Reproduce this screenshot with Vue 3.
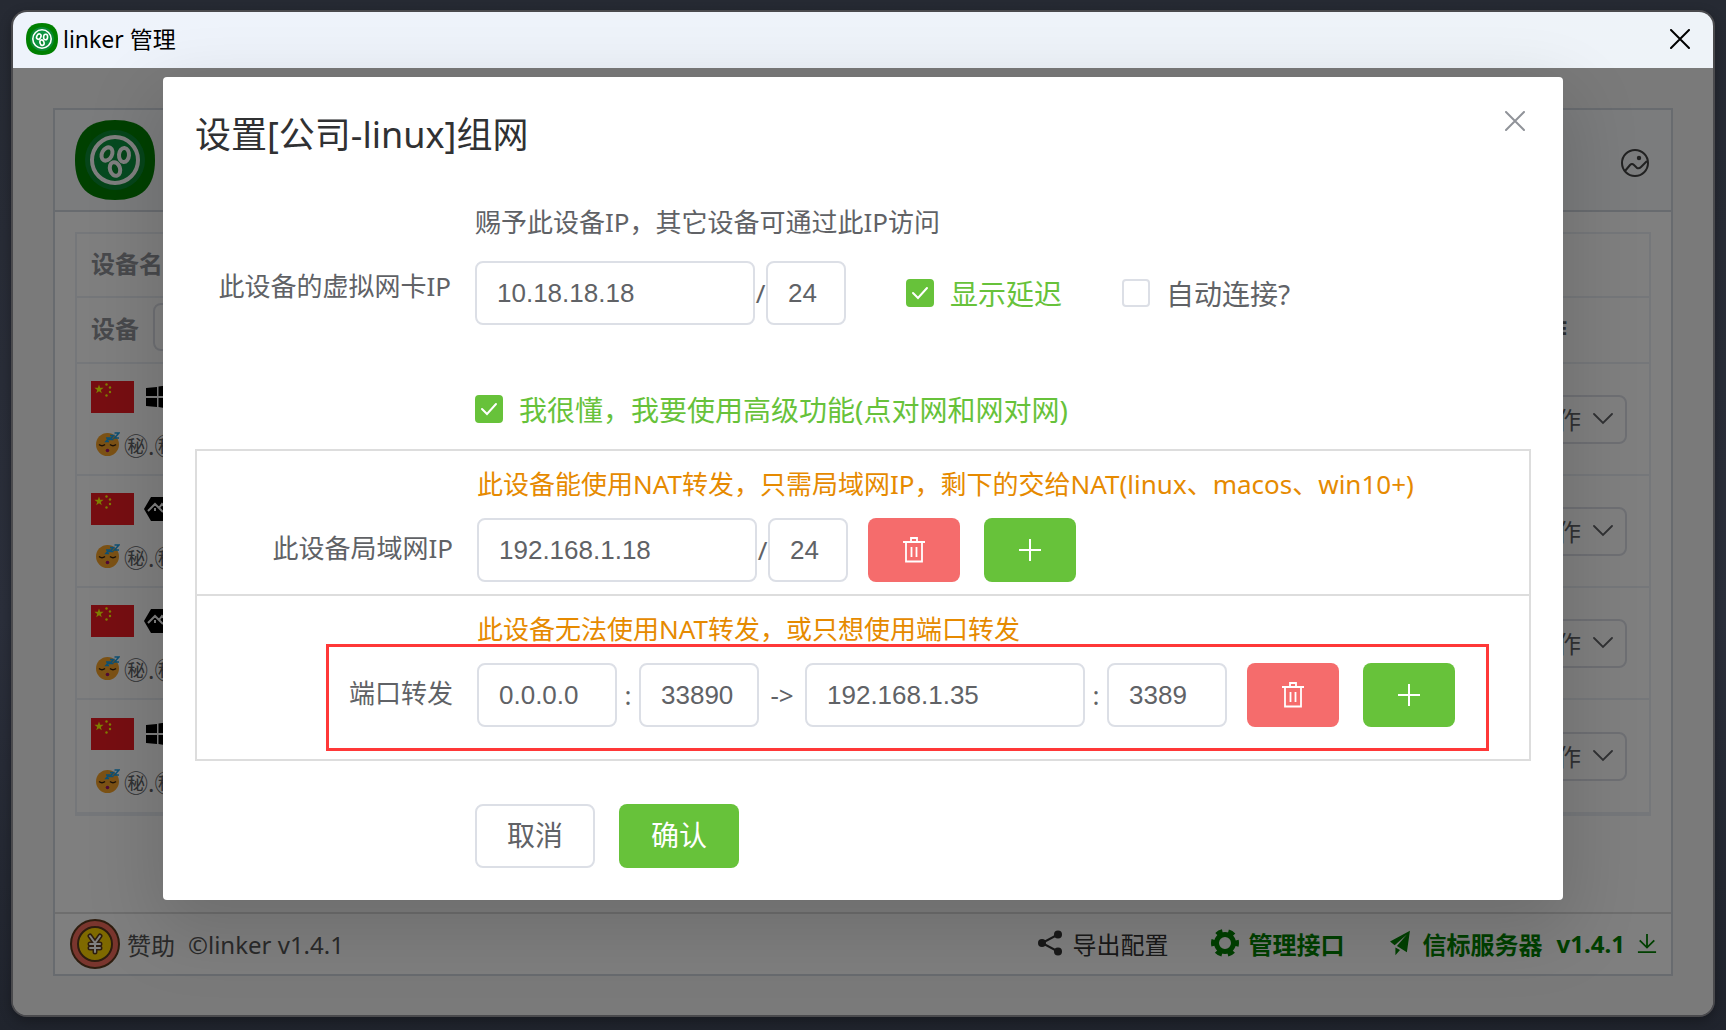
<script setup>
import { ref } from 'vue'

const devices = ref([
  { id: 1, system: 'windows' },
  { id: 2, system: 'alpine' },
  { id: 3, system: 'alpine' },
  { id: 4, system: 'windows' },
])
const maskedIp = '㊙.㊙.㊙.㊙'

const keyword = ref('')
const ip = ref('10.18.18.18')
const prefix = ref('24')
const showDelay = ref(true)
const autoConnect = ref(false)
const advanced = ref(true)
const lanIp = ref('192.168.1.18')
const lanPrefix = ref('24')
const listenIp = ref('0.0.0.0')
const listenPort = ref('33890')
const targetIp = ref('192.168.1.35')
const targetPort = ref('3389')
</script>

<template>
  <!-- shared icon symbols -->
  <svg class="symbols" aria-hidden="true">
    <symbol id="logo" viewBox="0 0 80 80">
      <path d="M40 0C67 0 80 13 80 40S67 80 40 80 0 67 0 40 13 0 40 0Z" fill="#008000" />
      <circle cx="40" cy="40" r="30" fill="#0c8a35" />
      <circle cx="40" cy="40" r="23" fill="#0d9440" stroke="#fff" stroke-width="4" />
      <g fill="#0a8a30" stroke="#fff" stroke-width="4">
        <ellipse cx="32" cy="34" rx="5" ry="7" transform="rotate(28 32 34)" />
        <ellipse cx="49" cy="35" rx="5" ry="7" transform="rotate(4 49 35)" />
        <ellipse cx="40" cy="49" rx="5" ry="7" transform="rotate(-18 40 49)" />
      </g>
    </symbol>
    <symbol id="flag" viewBox="0 0 43 32">
      <path d="M0 0h43v32H0z" fill="#ee1c25" />
      <path d="M8 3.6l1.1 3.2h3.5L9.8 8.9l1 3.3L8 10.2l-2.8 2 1-3.3-2.8-2.1h3.5z" fill="#ff0" />
      <g fill="#ff0">
        <circle cx="15.500" cy="3.500" r="1.200" />
        <circle cx="19" cy="6.500" r="1.200" />
        <circle cx="19" cy="11" r="1.200" />
        <circle cx="15.500" cy="14.500" r="1.200" />
      </g>
    </symbol>
    <symbol id="windows" viewBox="0 0 24 24">
      <path d="M0 3l11-1v9H0zM12.500 1.500L24 0v11H12.500zM0 13h11v9l-11-1zM12.500 13H24v11l-11.500-2z" />
    </symbol>
    <symbol id="alpine" viewBox="0 0 28 24">
      <path d="M7 0h14l7 12-7 12H7L0 12z" />
      <path d="M4 14l7-7 8 8M15 11l3-4 7 7M11 11v3" fill="none" stroke="#fff" stroke-width="2" />
    </symbol>
    <symbol id="sleep" viewBox="0 0 24 24">
      <circle cx="11.500" cy="12.500" r="11.500" fill="#f9a52b" />
      <path d="M3 12.500q3 2.500 6 0M14 12.500q3 2.500 6 0" fill="none" stroke="#3a2410" stroke-width="1.600" />
      <circle cx="11.500" cy="18.500" r="1.800" fill="#a0146e" />
      <path d="M10 6h3l-3 3.500h3M14 3.500h3.500L14 7.500h3.500M18.500 1H23l-4.500 5H23" fill="none" stroke="#1aa0e8" stroke-width="1.600" />
    </symbol>
    <symbol id="close" viewBox="0 0 20 20">
      <path d="M1 1l18 18M19 1L1 19" fill="none" stroke="currentColor" stroke-width="2" stroke-linecap="round" />
    </symbol>
    <symbol id="trash" viewBox="0 0 24 26">
      <path d="M1 5h22M9 5V1h6v4M4 5v19.500h16V5M9.500 10v10M14.500 10v10" fill="none" stroke="currentColor" stroke-width="1.800" />
    </symbol>
    <symbol id="plus" viewBox="0 0 24 24">
      <path d="M12 1v22M1 12h22" fill="none" stroke="currentColor" stroke-width="2" />
    </symbol>
    <symbol id="chevron" viewBox="0 0 20 20">
      <path d="M1 6l9 9 9-9" fill="none" stroke="currentColor" stroke-width="1.800" stroke-linecap="round" />
    </symbol>
  </svg>

  <div class="desktop">
    <section class="window">
      <header class="titlebar">
        <svg class="titlebar-logo"><use href="#logo" /></svg>
        <h1>linker 管理</h1>
        <button class="icon-button" type="button" aria-label="关闭窗口">
          <svg class="icon-20"><use href="#close" /></svg>
        </button>
      </header>

      <div class="viewport">
        <main class="frame">
          <div class="frame-head">
            <svg class="frame-logo"><use href="#logo" /></svg>
            <button class="icon-button picture-button" type="button" aria-label="背景图片">
              <svg class="icon-28" viewBox="0 0 28 28" fill="none" stroke="currentColor" stroke-width="2">
                <circle cx="14" cy="14" r="13" />
                <path d="M4 22l5-6q2-2 4 0l3 3q2 1 4-1l6-6" />
                <circle cx="18" cy="9" r="1.200" fill="currentColor" />
              </svg>
            </button>
          </div>

          <div class="frame-body">
            <table class="devices">
              <thead>
                <tr class="row-head"><th>设备名</th><th class="col-op"></th></tr>
                <tr class="row-search">
                  <th>
                    <label class="search">设备<input v-model="keyword" type="text" /></label>
                  </th>
                  <th class="col-op">操作</th>
                </tr>
              </thead>
              <tbody>
                <tr v-for="device in devices" :key="device.id">
                  <td>
                    <div class="device-line">
                      <svg class="flag"><use href="#flag" /></svg>
                      <svg class="system"><use :href="'#' + device.system" /></svg>
                    </div>
                    <div class="device-line device-ip">
                      <svg class="icon-24"><use href="#sleep" /></svg>
                      <span>{{ maskedIp }}</span>
                    </div>
                  </td>
                  <td class="col-op">
                    <button class="op" type="button">
                      操作<svg class="icon-20"><use href="#chevron" /></svg>
                    </button>
                  </td>
                </tr>
              </tbody>
            </table>
          </div>

          <footer class="frame-foot">
            <a class="sponsor" href="#">
              <svg class="coin" viewBox="0 0 50 50">
                <circle cx="25" cy="25" r="24" fill="#f56c5c" stroke="#5c3a1e" stroke-width="2" />
                <circle cx="25" cy="25" r="17" fill="#ffd500" stroke="#5c3a1e" stroke-width="2" />
                <g fill="none" stroke-linecap="round" stroke-linejoin="round">
                  <path d="M20 17l5 7 5-7M25 24v9M20 25h10M20 29h10" stroke="#5c3a1e" stroke-width="5" />
                  <path d="M20 17l5 7 5-7M25 24v9M20 25h10M20 29h10" stroke="#fff" stroke-width="2" />
                </g>
              </svg>
              赞助
            </a>
            <a class="copyright" href="#">©linker v1.4.1</a>
            <nav class="foot-links">
              <a href="#">
                <svg class="icon-26" viewBox="0 0 24 26">
                  <path d="M20 4.500L4 13l16 8.500" fill="none" stroke="currentColor" stroke-width="2" />
                  <g fill="currentColor">
                    <circle cx="20" cy="4.500" r="4" /><circle cx="4" cy="13" r="4" /><circle cx="20" cy="21.500" r="4" />
                  </g>
                </svg>
                导出配置
              </a>
              <a class="online" href="#">
                <svg class="icon-28" viewBox="0 0 28 28" fill="none" stroke="currentColor">
                  <circle cx="14" cy="14" r="8.500" stroke-width="5" />
                  <circle cx="14" cy="14" r="12" stroke-width="4" stroke-dasharray="6.500 6.066" stroke-dashoffset="3.250" />
                </svg>
                管理接口
              </a>
              <a class="online" href="#">
                <svg class="icon-26" viewBox="0 0 26 34" fill="currentColor">
                  <path d="M26 1L0 15l6 5L22 6 9 21l13 8zM7 23v10l6-7z" />
                </svg>
                信标服务器
                <span class="version">v1.4.1</span>
                <svg class="icon-20" viewBox="0 0 20 22" fill="none" stroke="currentColor" stroke-width="2">
                  <path d="M10 1v14M2 8l8 8 8-8M0 21h20" />
                </svg>
              </a>
            </nav>
          </footer>
        </main>

        <div class="mask">
          <div class="dialog" role="dialog" aria-labelledby="dialog-title">
            <header class="dialog-head">
              <h2 id="dialog-title">设置[公司-linux]组网</h2>
              <button class="icon-button" type="button" aria-label="关闭">
                <svg class="icon-20"><use href="#close" /></svg>
              </button>
            </header>

            <form @submit.prevent>
              <div class="item">
                <label class="label label-card" for="ip">此设备的虚拟网卡IP</label>
                <div class="content">
                  <p class="hint">赐予此设备IP，其它设备可通过此IP访问</p>
                  <div class="controls">
                    <input id="ip" v-model="ip" class="field w-ip" type="text" />
                    <span class="slash">/</span>
                    <input v-model="prefix" class="field w-prefix" type="text" aria-label="掩码" />
                    <label class="check check-delay"><input v-model="showDelay" type="checkbox" /><span>显示延迟</span></label>
                    <label class="check check-auto"><input v-model="autoConnect" type="checkbox" /><span>自动连接?</span></label>
                  </div>
                </div>
              </div>

              <div class="item item-advanced">
                <label class="check"><input v-model="advanced" type="checkbox" /><span>我很懂，我要使用高级功能(点对网和网对网)</span></label>
              </div>

              <div class="advanced">
                <div class="item item-lan">
                  <label class="label" for="lan-ip">此设备局域网IP</label>
                  <div class="content">
                    <p class="hint hint-warn">此设备能使用NAT转发，只需局域网IP，剩下的交给NAT(linux、macos、win10+)</p>
                    <div class="controls">
                      <input id="lan-ip" v-model="lanIp" class="field w-ip" type="text" />
                      <span class="slash">/</span>
                      <input v-model="lanPrefix" class="field w-prefix" type="text" aria-label="局域网掩码" />
                      <button class="btn btn-icon btn-danger" type="button" aria-label="删除">
                        <svg class="icon-26"><use href="#trash" /></svg>
                      </button>
                      <button class="btn btn-icon btn-success" type="button" aria-label="添加">
                        <svg class="icon-24"><use href="#plus" /></svg>
                      </button>
                    </div>
                  </div>
                </div>

                <div class="item item-forward">
                  <label class="label" for="listen-ip">端口转发</label>
                  <div class="content">
                    <p class="hint hint-warn">此设备无法使用NAT转发，或只想使用端口转发</p>
                    <div class="controls">
                      <input id="listen-ip" v-model="listenIp" class="field w-listen" type="text" />
                      <span class="colon">:</span>
                      <input v-model="listenPort" class="field w-port" type="text" aria-label="监听端口" />
                      <span class="arrow">-&gt;</span>
                      <input v-model="targetIp" class="field w-ip" type="text" aria-label="目标IP" />
                      <span class="colon">:</span>
                      <input v-model="targetPort" class="field w-port" type="text" aria-label="目标端口" />
                      <button class="btn btn-icon btn-danger" type="button" aria-label="删除">
                        <svg class="icon-26"><use href="#trash" /></svg>
                      </button>
                      <button class="btn btn-icon btn-success" type="button" aria-label="添加">
                        <svg class="icon-24"><use href="#plus" /></svg>
                      </button>
                    </div>
                  </div>
                  <div class="highlight"></div>
                </div>
              </div>

              <div class="actions">
                <button class="btn btn-plain" type="button">取消</button>
                <button class="btn btn-success" type="submit">确认</button>
              </div>
            </form>
          </div>
        </div>
      </div>
    </section>
  </div>
</template>

<style>
body {
  background: #262a33;
}
</style>

<style scoped>
* {
  box-sizing: border-box;
}
.symbols {
  position: absolute;
  width: 0;
  height: 0;
}
.desktop {
  min-height: 100vh;
  display: flex;
  padding: 10px 11px 13px;
  background: linear-gradient(180deg, #262a33 0%, #2b2f3b 60%, #20242d 100%);
  font-family: "Noto Sans", "Noto Sans CJK SC", sans-serif;
  font-size: 24px;
  color: #606266;
}
button,
input {
  font-family: inherit;
  font-size: inherit;
  color: inherit;
}
button {
  cursor: pointer;
}
h1,
h2,
p {
  margin: 0;
  font-weight: 400;
}
a {
  color: inherit;
  text-decoration: none;
}
svg {
  flex: none;
}
.icon-20 {
  width: 20px;
  height: 20px;
}
.icon-24 {
  width: 24px;
  height: 24px;
}
.icon-26 {
  width: 26px;
  height: 26px;
}
.icon-28 {
  width: 28px;
  height: 28px;
}
.icon-button {
  display: flex;
  padding: 0;
  border: 0;
  background: none;
}

.window {
  flex: 1;
  display: flex;
  flex-direction: column;
  border: 2px solid #4a4a4d;
  border-radius: 16px;
  overflow: hidden;
  box-shadow: 0 4px 12px rgba(0, 0, 0, 0.3);
}
.titlebar {
  display: flex;
  align-items: center;
  height: 56px;
  padding: 0 23px 2px 13px;
  background: linear-gradient(90deg, #eef3fb, #eef3f8);
  color: #000;
}
.titlebar h1 {
  flex: 1;
  margin-left: 5px;
  padding-bottom: 2px;
  font-size: 23px;
}
.titlebar-logo {
  width: 32px;
  height: 32px;
}

.viewport {
  flex: 1;
  position: relative;
  display: flex;
  padding: 40px 40px 39px;
  background: #f5f5f5;
}
.frame {
  flex: 1;
  display: flex;
  flex-direction: column;
  border: 2px solid #d0d7de;
  background: #fff;
}
.frame-head {
  display: flex;
  align-items: center;
  justify-content: space-between;
  height: 102px;
  padding: 0 22px 0 20px;
  border-bottom: 2px solid #d0d7de;
  background: #f6f8fa;
  color: #444;
}
.picture-button {
  padding-top: 6px;
}
.frame-logo {
  width: 80px;
  height: 80px;
}
.frame-body {
  flex: 1;
  padding: 20px;
}
.devices {
  width: 100%;
  border: 2px solid #ebeef5;
  border-bottom-width: 4px;
  border-spacing: 0;
}
.devices th,
.devices td {
  padding: 0 14px;
  border-bottom: 2px solid #ebeef5;
  text-align: left;
}
.devices tbody tr:last-child td {
  border-bottom: 0;
}
.devices th {
  padding-bottom: 6px;
  color: #909399;
}
.devices .row-head {
  height: 64px;
}
.devices .row-search {
  height: 66px;
}
.devices tbody tr {
  height: 112px;
}
.devices .col-op {
  width: 144px;
  color: #606266;
}
.search {
  display: flex;
  align-items: center;
  gap: 14px;
}
.search input {
  width: 200px;
  height: 48px;
  border: 2px solid #dcdfe6;
  border-radius: 8px;
  background: #fff;
}
.device-line {
  display: flex;
  align-items: center;
  height: 32px;
}
.device-line:first-child {
  margin-top: 3px;
}
.device-ip {
  margin-top: 15px;
  padding-left: 5px;
  gap: 4px;
}
.flag {
  width: 43px;
  height: 32px;
}
.system {
  width: 28px;
  height: 24px;
  margin-left: 10px;
}
.op {
  display: flex;
  align-items: center;
  gap: 12px;
  height: 49px;
  padding: 0 12px 2px;
  border: 2px solid #dcdfe6;
  border-radius: 8px;
  background: #fff;
  white-space: nowrap;
}
.frame-foot {
  display: flex;
  align-items: center;
  height: 62px;
  padding: 0 14px 0 15px;
  border-top: 2px solid #dcdcdc;
  color: #555;
}
.sponsor {
  display: flex;
  align-items: center;
  gap: 7px;
}
.coin {
  width: 50px;
  height: 50px;
}
.copyright {
  margin-left: 13px;
}
.foot-links {
  flex: 1;
  display: flex;
  justify-content: flex-end;
  gap: 42px;
  padding-bottom: 2px;
  color: #333;
}
.foot-links a {
  display: flex;
  align-items: center;
  gap: 10px;
}
.foot-links .online {
  color: #008000;
  font-weight: 700;
}
.version {
  margin: 0 2px 0 4px;
}

.mask {
  position: absolute;
  inset: 0;
  padding: 9px 40px 0;
  background: rgba(0, 0, 0, 0.5);
}
.dialog {
  max-width: 1400px;
  margin: 0 auto;
  padding: 32px;
  border-radius: 4px;
  background: #fff;
  box-shadow: 0 24px 72px 8px rgba(0, 0, 0, 0.14);
}
.dialog-head {
  display: flex;
  justify-content: space-between;
  align-items: flex-start;
  margin-bottom: 33px;
  color: #909399;
}
.dialog-head h2 {
  font-size: 36px;
  line-height: 52px;
  color: #303133;
}
.dialog-head .icon-button {
  padding: 2px 6px;
}

.item {
  display: flex;
  align-items: flex-end;
  font-size: 26px;
}
.label {
  width: 280px;
  padding-right: 24px;
  line-height: 68px;
  text-align: right;
}
.label-card {
  line-height: 78px;
}
.content {
  flex: 1;
}
.hint {
  margin-bottom: 11px;
  line-height: 56px;
}
.hint-warn {
  margin-bottom: 0;
  line-height: 67px;
  color: #e68a00;
}
.controls {
  display: flex;
  align-items: center;
}
.field {
  height: 64px;
  padding: 0 20px;
  border: 2px solid #dcdfe6;
  border-radius: 8px;
  background: #fff;
  font-family: "Liberation Sans", sans-serif;
  font-size: 26px;
}
.w-ip {
  width: 280px;
}
.w-prefix {
  width: 80px;
}
.w-listen {
  width: 140px;
}
.w-port {
  width: 120px;
}
.slash,
.colon,
.arrow {
  text-align: center;
}
.slash {
  width: 11px;
}
.colon {
  width: 22px;
}
.arrow {
  width: 46px;
}
.check {
  display: flex;
  align-items: center;
  gap: 16px;
  height: 64px;
  font-size: 28px;
}
.check input {
  appearance: none;
  width: 28px;
  height: 28px;
  margin: 0;
  border: 2px solid #dcdfe6;
  border-radius: 4px;
  background: #fff;
}
.check input:checked {
  border-color: #67c23a;
  background: #67c23a url("data:image/svg+xml,%3Csvg xmlns='http://www.w3.org/2000/svg' viewBox='0 0 24 24'%3E%3Cpath d='M5 12l5 5 9-10' fill='none' stroke='white' stroke-width='2' stroke-linecap='round'/%3E%3C/svg%3E") center / 24px no-repeat;
}
.check input:checked + span {
  color: #67c23a;
}
.check-delay,
.check-auto {
  margin-left: 60px;
}
.item-advanced {
  margin: 52px 0 8px;
  padding-left: 280px;
}
.advanced {
  border: 2px solid #ddd;
}
.item-lan {
  padding-bottom: 12px;
  border-bottom: 2px solid #ddd;
}
.item-forward {
  position: relative;
  padding-bottom: 32px;
}
.highlight {
  position: absolute;
  inset: 48px 40px 8px 129px;
  border: 3px solid #ff3838;
  pointer-events: none;
}
.btn {
  display: flex;
  align-items: center;
  justify-content: center;
  width: 120px;
  height: 64px;
  padding: 0 0 4px;
  border: 0;
  border-radius: 8px;
  font-size: 28px;
  color: #fff;
}
.btn-icon {
  width: 92px;
  padding: 0;
}
.btn-danger {
  margin: 0 24px 0 20px;
  background: #f56c6c;
}
.btn-success {
  background: #67c23a;
}
.btn-plain {
  border: 2px solid #dcdfe6;
  background: #fff;
  color: #606266;
}
.actions {
  display: flex;
  gap: 24px;
  margin-top: 43px;
  padding-left: 280px;
}
</style>
